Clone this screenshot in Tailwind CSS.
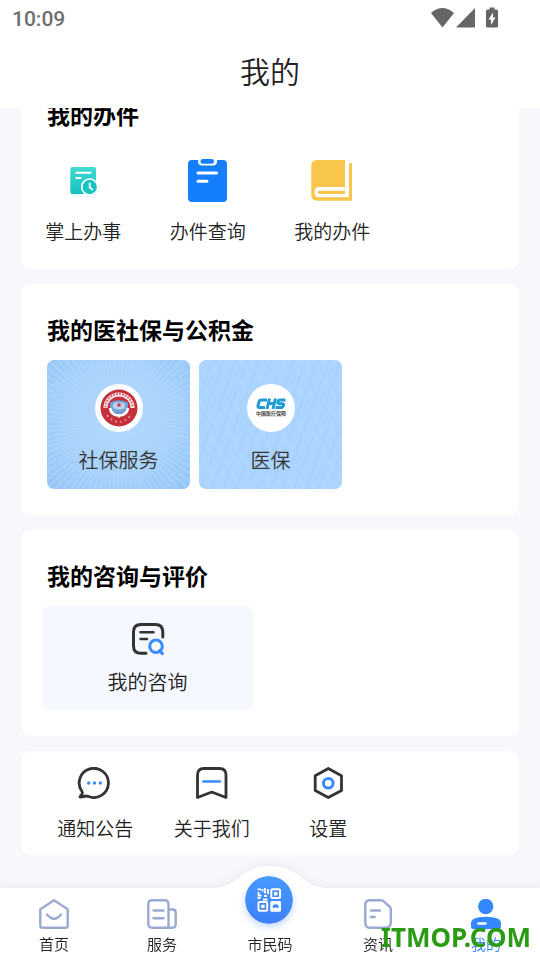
<!DOCTYPE html>
<html lang="zh-CN">
<head>
<meta charset="utf-8">
<meta name="viewport" content="width=device-width, initial-scale=1">
<title>我的</title>
<script src="https://cdn.jsdelivr.net/npm/@tailwindcss/browser@4"></script>
</head>
<body class="flex min-h-screen flex-col bg-[#f6f8fc] font-['Noto_Sans_CJK_SC',sans-serif] font-[350] text-[#222]">

<header class="relative z-10 bg-white">
  <div class="flex h-9 items-center justify-between pr-10 pl-3 text-[#666]">
    <time class="pt-px font-[Roboto,sans-serif] text-[21px] leading-9 font-medium text-[#6e6e6e]">10:09</time>
    <svg class="h-6 w-[70px]" viewBox="430 6 70 24" fill="#666" aria-label="状态">
      <path d="M431 13Q442.500 3 454 13L442.500 27.500Z"/>
      <path d="M475 8V27.500H456Z"/>
      <path fill-rule="evenodd" d="M489.500 7.500h5v2h2q1.500 0 1.500 1.500v15q0 1.500-1.500 1.500h-9q-1.500 0-1.500-1.500v-15q0-1.500 1.500-1.500h2zM493 12.500l-4.500 7h2.500v5.500l4.500-7.500h-2.500z"/>
    </svg>
  </div>
  <h1 class="pb-1 text-center text-[30px] leading-[68px] font-[350]">我的</h1>
</header>

<main class="flex flex-1 flex-col gap-[15px] overflow-hidden px-[21px] pb-[33px]">
  <section class="rounded-b-[10px] bg-white pb-6">
    <h2 class="-mt-[11px] pl-[26px] text-[23px] leading-[34px] font-bold text-black">我的办件</h2>
    <div class="mt-[27px] grid grid-cols-4">
      <a href="#" class="flex flex-col items-center gap-[15px]">
        <svg class="size-11" viewBox="61 158 44 44" fill="none" stroke-linecap="round">
          <defs><linearGradient id="teal" x1="0" y1="0" x2="0" y2="1"><stop stop-color="#45dbd2"/><stop offset="1" stop-color="#12bfc2"/></linearGradient></defs>
          <rect x="71" y="193" width="25" height="5" rx="2" fill="#effbfd"/>
          <rect x="70.300" y="167" width="25.700" height="27" rx="2" fill="url(#teal)"/>
          <path d="M76.500 172.700H90.500M76.500 178H80.700" stroke="#fff" stroke-width="2"/>
          <circle cx="89.700" cy="187" r="8" fill="#1bc2c4" stroke="#fff" stroke-width="1.700"/>
          <path d="M89.700 183.500V187.500L92.300 189.500" stroke="#fff" stroke-width="1.800"/>
        </svg>
        <span class="text-[19px] leading-7 whitespace-nowrap">掌上办事</span>
      </a>
      <a href="#" class="flex flex-col items-center gap-[15px]">
        <svg class="size-11" viewBox="186 158 44 44" fill="none" stroke-linecap="round">
          <rect x="188" y="160" width="39" height="42" rx="4" fill="#147efd"/>
          <path d="M198 158H217V161.500Q217 165.500 213 165.500H202Q198 165.500 198 161.500Z" fill="#fff"/>
          <rect x="200.500" y="159" width="13.500" height="4.700" rx="2.300" fill="#147efd"/>
          <path d="M198 173H216.500M198 181.300H207" stroke="#fff" stroke-width="3"/>
        </svg>
        <span class="text-[19px] leading-7 whitespace-nowrap">办件查询</span>
      </a>
      <a href="#" class="flex flex-col items-center gap-[15px]">
        <svg class="size-11" viewBox="310 158 44 44" fill="none">
          <path d="M317 160H345V187H318.500Q314.500 187 314.500 192Q314.500 197.300 318.500 197.300H349V163.300H352V200.700H317Q311.300 200.700 311.300 195V166Q311.300 160 317 160Z" fill="#f7c64b"/>
          <path d="M345 190.700H319.500Q317.800 190.700 317.800 192.300Q317.800 194 319.500 194H345Z" fill="#f7c64b"/>
        </svg>
        <span class="text-[19px] leading-7 whitespace-nowrap">我的办件</span>
      </a>
    </div>
  </section>

  <section class="rounded-[10px] bg-white px-[26px] pt-7 pb-[26px]">
    <h2 class="text-[23px] leading-[34px] font-bold text-black">我的医社保与公积金</h2>
    <div class="mt-[14px] flex gap-[9px]">
      <a href="#" class="flex w-[143px] flex-col items-center gap-[14px] rounded-[7px] bg-[radial-gradient(circle_at_50%_45%,#b3d9fc_0%,#b0d7fcc0_55%,transparent_100%),repeating-conic-gradient(from_0deg_at_50%_50%,#ffffff30_0deg_1deg,transparent_1deg_4deg),linear-gradient(#92c5f7,#92c5f7)] pt-6 pb-[15px] text-[#333]">
        <svg class="size-12" viewBox="0 0 48 48" fill="none">
          <circle cx="24" cy="24" r="24" fill="#fff"/>
          <circle cx="24" cy="24" r="18.500" fill="#c6303a"/>
          <path d="M10.500 24A13.500 13.500 0 0 1 37.500 24" stroke="#fff" stroke-width="4"/>
          <path d="M10.500 23.500A13.500 13.500 0 0 1 37.500 23.500" stroke="#d46a70" stroke-width="2.200" stroke-dasharray="2 1"/>
          <path d="M15 18.500Q24 14 33 18.500V23Q32 29 24 30Q16 29 15 23Z" fill="#6fa3d8"/>
          <path d="M18 19.500Q24 17 30 19.500V24Q24 27 18 24Z" fill="#b7d0eb"/>
          <path d="M15 24Q16 31 23 31.500H25Q32 31 33 24" stroke="#fff" stroke-width="2.500"/>
          <path d="M20 30L24 34L28 30" fill="#fff"/>
          <circle cx="24" cy="21" r="1.800" fill="#d9323c"/>
          <path d="M12 31Q24 45 36 31" stroke="#e08a8f" stroke-width="2" stroke-dasharray="2 3"/>
        </svg>
        <span class="text-[20px] leading-7">社保服务</span>
      </a>
      <a href="#" class="flex w-[143px] flex-col items-center gap-[14px] rounded-[7px] bg-[#abd5fe] bg-[repeating-linear-gradient(60deg,#ffffff0c_0px_2px,transparent_2px_9px),repeating-linear-gradient(110deg,#80b8f018_0px_3px,transparent_3px_11px)] pt-6 pb-[15px] text-[#333]">
        <svg class="size-12" viewBox="0 0 48 48" fill="none">
          <circle cx="24" cy="24" r="24" fill="#fff"/>
          <path d="M20 16H14Q12.500 16 12 18L11 21.500Q10.500 23.500 12.500 23.500H18M22.500 14.500L20 25M28.500 14.500L26 25M21.500 19.500H27M38.500 16H33Q31.500 16 31 18Q30.500 19.700 32 19.700H35.500Q37 19.700 36.500 21.500Q36 23.500 34.500 23.500H28.500" stroke="#229bd5" stroke-width="3"/>
          <text x="24" y="31" text-anchor="middle" font-size="5" font-weight="700" fill="#444" font-family="Noto Sans CJK SC, sans-serif">中国医疗保障</text>
          <path d="M12 32.500H36" stroke="#ccc" stroke-width="1" stroke-dasharray="2 1"/>
        </svg>
        <span class="text-[20px] leading-7">医保</span>
      </a>
    </div>
  </section>

  <section class="rounded-[10px] bg-white px-[21px] pt-7 pb-[26px]">
    <h2 class="pl-[5px] text-[23px] leading-[34px] font-bold text-black">我的咨询与评价</h2>
    <a href="#" class="mt-[14px] flex w-[211px] flex-col items-center gap-3 rounded-[7px] bg-[#f5f8fe] pt-4 pb-[14px]">
      <svg class="size-[34px]" viewBox="131 622 34 34" fill="none" stroke="#333" stroke-width="3" stroke-linecap="round">
        <path d="M162.800 637V632Q162.800 624.500 155.500 624.500H141Q133.500 624.500 133.500 632V646Q133.500 653.300 141 653.300H146"/>
        <path d="M140.500 632.200H153.500M140.500 639H147" stroke-width="2.500"/>
        <circle cx="156" cy="646.300" r="6.300" stroke="#3b8bff"/>
        <path d="M159.500 650.500L162.500 653.700" stroke="#3b8bff"/>
      </svg>
      <span class="text-[20px] leading-7">我的咨询</span>
    </a>
  </section>

  <section class="grid grid-cols-4 rounded-[10px] bg-white px-4 pt-4 pb-[13px]">
    <a href="#" class="flex flex-col items-center gap-[15px]">
      <svg class="h-8 w-9" viewBox="77 767 36 32" fill="none" stroke="#333" stroke-width="2.800" stroke-linejoin="round">
        <path d="M82 791.500A14.600 14.600 0 1 1 88 796.300Q85.500 795.500 83.500 796.700Q81.500 797.300 80 797Q80.500 795.500 82 794.300Q82.700 793 82 791.500Z"/>
        <g fill="#3b8bff" stroke="none"><circle cx="88.700" cy="783" r="1.700"/><circle cx="94.500" cy="783" r="1.700"/><circle cx="100.300" cy="783" r="1.700"/></g>
      </svg>
      <span class="text-[19px] leading-7 whitespace-nowrap">通知公告</span>
    </a>
    <a href="#" class="flex flex-col items-center gap-[15px]">
      <svg class="h-8 w-9" viewBox="194 767 36 32" fill="none" stroke="#333" stroke-width="2.800" stroke-linejoin="round" stroke-linecap="round">
        <path d="M197.500 797.500V775Q197.500 768.500 204 768.500H219.500Q226 768.500 226 775V797.500L213 792.500Q211.700 792 210.500 792.500Z"/>
        <path d="M203.300 781.500H220" stroke="#3b8bff" stroke-width="2.500"/>
      </svg>
      <span class="text-[19px] leading-7 whitespace-nowrap">关于我们</span>
    </a>
    <a href="#" class="flex flex-col items-center gap-[15px]">
      <svg class="h-8 w-9" viewBox="310 767 36 32" fill="none" stroke="#333" stroke-width="2.800" stroke-linejoin="round">
        <path d="M328.300 768.500L341.500 775.700V790.500L328.300 797.500L315.200 790.500V775.700Z"/>
        <circle cx="328.300" cy="783.200" r="4.800" stroke="#3b8bff" stroke-width="3"/>
      </svg>
      <span class="text-[19px] leading-7 whitespace-nowrap">设置</span>
    </a>
  </section>
</main>

<footer class="relative drop-shadow-[0_-2px_4px_rgba(0,0,0,0.05)]">
  <svg class="absolute -top-[22px] left-1/2 h-6 w-[108px] -translate-x-1/2" viewBox="215 866 108 24" fill="#fff">
    <path d="M215 888Q227 887 237 878Q251 866 269 866Q287 866 301 878Q312 887 323 888V890H215Z"/>
  </svg>
  <nav class="relative grid grid-cols-5 bg-white pt-[11px] pb-[6px] text-[15px] leading-5">
    <a href="#" class="flex flex-col items-center gap-[5px]">
      <svg class="size-[30px]" viewBox="39 899 30 30" fill="none" stroke="#9aaad0" stroke-width="2.400" stroke-linejoin="round" stroke-linecap="round">
        <path d="M54 900.300L67.700 909.300V925.700Q67.700 927.700 65.700 927.700H42.300Q40.300 927.700 40.300 925.700V909.300Z"/>
        <path d="M47 914.500Q54 923 61 914.500"/>
      </svg>
      <span>首页</span>
    </a>
    <a href="#" class="flex flex-col items-center gap-[5px]">
      <svg class="size-[30px]" viewBox="147 899 30 30" fill="none" stroke="#9aaad0" stroke-width="2.400" stroke-linecap="round">
        <path d="M168.500 927.700V904.300Q168.500 900.300 164.500 900.300H152.300Q148.300 900.300 148.300 904.300V923.700Q148.300 927.700 152.300 927.700H172.500Q175.700 927.700 175.700 924V912.500Q175.700 909.500 172.700 909.500H169"/>
        <path d="M153.500 910.500H163.500M153.500 918.300H163.500"/>
      </svg>
      <span>服务</span>
    </a>
    <a href="#" class="relative flex flex-col items-center gap-[5px]">
      <span class="h-[30px]"></span>
      <svg class="absolute -top-[23px] right-[31px] size-[48px] rounded-full shadow-[0_3px_7px_rgba(60,130,255,0.3)]" viewBox="245 876 48 48" fill="none">
        <defs><linearGradient id="blue" x1="0" y1="0" x2="0" y2="1"><stop stop-color="#459aff"/><stop offset="1" stop-color="#3f80f8"/></linearGradient></defs>
        <circle cx="269" cy="900" r="24" fill="url(#blue)"/>
        <g stroke="#fff" stroke-width="2">
          <rect x="271.300" y="889.300" width="8.700" height="8.700" rx="1"/>
          <rect x="258.500" y="902" width="8.700" height="8.700" rx="1"/>
          <path d="M257.500 889.300H261M258.500 892V895.500H261.500M262.500 891.500V889M265 893.500V888M268 889V894M264 896H267M257.500 898H260.500M263 899.500H267.500" stroke-width="1.800"/>
        </g>
        <rect x="274" y="892" width="3.400" height="3.400" fill="#fff"/>
        <rect x="261.200" y="904.700" width="3.400" height="3.400" fill="#fff"/>
        <rect x="270.300" y="901" width="10.700" height="10.700" rx="1.500" fill="#fff"/>
        <path d="M272.300 907Q273.500 903.500 275.700 904.500Q278 903.300 279 907L277.300 908.300L275.700 907L274 908.300Z" fill="#3f88fa"/>
      </svg>
      <span>市民码</span>
    </a>
    <a href="#" class="flex flex-col items-center gap-[5px]">
      <svg class="size-[30px]" viewBox="363 899 30 30" fill="none" stroke="#9aaad0" stroke-width="2.400" stroke-linejoin="round" stroke-linecap="round">
        <path d="M369.500 900.300H380.500Q382.500 900.300 384 901.700L389.500 906.500Q390.800 907.800 390.800 909.500V922.500Q390.800 927.700 385.500 927.700H369.500Q365.300 927.700 365.300 922.500V905.500Q365.300 900.300 369.500 900.300Z"/>
        <path d="M370.800 910.500H380M370.800 917H374.700"/>
      </svg>
      <span>资讯</span>
    </a>
    <a href="#" aria-current="page" class="flex flex-col items-center gap-[5px] text-[#3388ff]">
      <svg class="size-[30px]" viewBox="471 899 30 30" fill="#3388ff">
        <circle cx="485.700" cy="906.500" r="7.700"/>
        <path d="M471 927V923Q471 917 486 916.700Q501 917 501 923V927Q501 929 499 929H473Q471 929 471 927Z"/>
        <path d="M478.500 923.500H485.500" stroke="#fff" stroke-width="2.500" stroke-linecap="round"/>
      </svg>
      <span>我的</span>
    </a>
  </nav>
  <div class="pointer-events-none absolute right-[9px] bottom-[6px] font-['Noto_Sans',sans-serif] text-[26px] leading-[34px] font-bold text-[#2b9a14]">ITMOP.COM</div>
</footer>
</body>
</html>
